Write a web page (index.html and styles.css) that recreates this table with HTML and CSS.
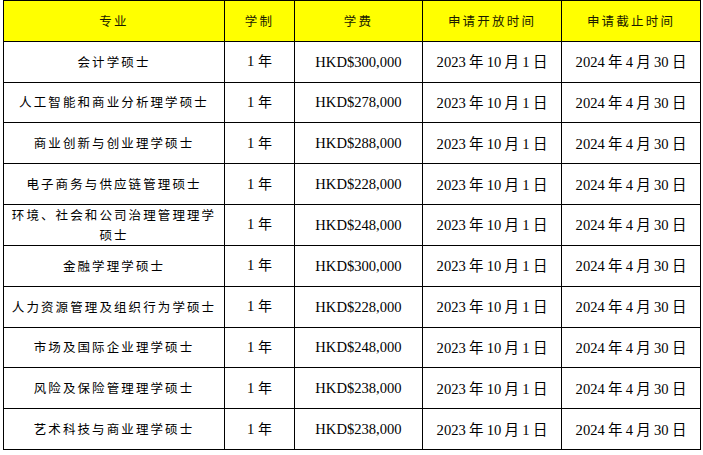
FILE: index.html
```html
<!DOCTYPE html>
<html lang="zh">
<head>
<meta charset="utf-8">
<link rel="stylesheet" href="styles.css">
</head>
<body>
<table class="fees">
  <colgroup>
    <col class="c1"><col class="c2"><col class="c3"><col class="c4"><col class="c5">
  </colgroup>
  <thead>
    <tr class="head">
      <th>专业</th><th>学制</th><th>学费</th><th>申请开放时间</th><th>申请截止时间</th>
    </tr>
  </thead>
  <tbody>
    <tr><td class="name">会计学硕士</td><td><span class="num">1</span> 年</td><td class="num">HKD$300,000</td><td class="date"><span class="num">2023</span> 年 <span class="num">10</span> 月 <span class="num">1</span> 日</td><td class="date"><span class="num">2024</span> 年 <span class="num">4</span> 月 <span class="num">30</span> 日</td></tr>
    <tr><td class="name">人工智能和商业分析理学硕士</td><td><span class="num">1</span> 年</td><td class="num">HKD$278,000</td><td class="date"><span class="num">2023</span> 年 <span class="num">10</span> 月 <span class="num">1</span> 日</td><td class="date"><span class="num">2024</span> 年 <span class="num">4</span> 月 <span class="num">30</span> 日</td></tr>
    <tr><td class="name">商业创新与创业理学硕士</td><td><span class="num">1</span> 年</td><td class="num">HKD$288,000</td><td class="date"><span class="num">2023</span> 年 <span class="num">10</span> 月 <span class="num">1</span> 日</td><td class="date"><span class="num">2024</span> 年 <span class="num">4</span> 月 <span class="num">30</span> 日</td></tr>
    <tr><td class="name">电子商务与供应链管理硕士</td><td><span class="num">1</span> 年</td><td class="num">HKD$228,000</td><td class="date"><span class="num">2023</span> 年 <span class="num">10</span> 月 <span class="num">1</span> 日</td><td class="date"><span class="num">2024</span> 年 <span class="num">4</span> 月 <span class="num">30</span> 日</td></tr>
    <tr><td class="name wrap">环境、社会和公司治理管理理学硕士</td><td><span class="num">1</span> 年</td><td class="num">HKD$248,000</td><td class="date"><span class="num">2023</span> 年 <span class="num">10</span> 月 <span class="num">1</span> 日</td><td class="date"><span class="num">2024</span> 年 <span class="num">4</span> 月 <span class="num">30</span> 日</td></tr>
    <tr><td class="name">金融学理学硕士</td><td><span class="num">1</span> 年</td><td class="num">HKD$300,000</td><td class="date"><span class="num">2023</span> 年 <span class="num">10</span> 月 <span class="num">1</span> 日</td><td class="date"><span class="num">2024</span> 年 <span class="num">4</span> 月 <span class="num">30</span> 日</td></tr>
    <tr><td class="name">人力资源管理及组织行为学硕士</td><td><span class="num">1</span> 年</td><td class="num">HKD$228,000</td><td class="date"><span class="num">2023</span> 年 <span class="num">10</span> 月 <span class="num">1</span> 日</td><td class="date"><span class="num">2024</span> 年 <span class="num">4</span> 月 <span class="num">30</span> 日</td></tr>
    <tr><td class="name">市场及国际企业理学硕士</td><td><span class="num">1</span> 年</td><td class="num">HKD$248,000</td><td class="date"><span class="num">2023</span> 年 <span class="num">10</span> 月 <span class="num">1</span> 日</td><td class="date"><span class="num">2024</span> 年 <span class="num">4</span> 月 <span class="num">30</span> 日</td></tr>
    <tr><td class="name">风险及保险管理理学硕士</td><td><span class="num">1</span> 年</td><td class="num">HKD$238,000</td><td class="date"><span class="num">2023</span> 年 <span class="num">10</span> 月 <span class="num">1</span> 日</td><td class="date"><span class="num">2024</span> 年 <span class="num">4</span> 月 <span class="num">30</span> 日</td></tr>
    <tr><td class="name">艺术科技与商业理学硕士</td><td><span class="num">1</span> 年</td><td class="num">HKD$238,000</td><td class="date"><span class="num">2023</span> 年 <span class="num">10</span> 月 <span class="num">1</span> 日</td><td class="date"><span class="num">2024</span> 年 <span class="num">4</span> 月 <span class="num">30</span> 日</td></tr>
  </tbody>
</table>
</body>
</html>
```

FILE: styles.css
```css
html, body {
  margin: 0;
  padding: 0;
  background: #ffffff;
}

body {
  padding-left: 3px;
  font-family: "Liberation Serif", "Noto Sans CJK SC", serif;
  color: #000000;
}

.fees {
  border-collapse: collapse;
  table-layout: fixed;
  width: 697px;
  font-size: 14px;
}

.c1 { width: 221px; }
.c2 { width: 70px; }
.c3 { width: 128px; }
.c4 { width: 139px; }
.c5 { width: 139px; }

.fees th,
.fees td {
  border: 1px solid #000000;
  padding: 0 7px;
  text-align: center;
  vertical-align: middle;
  height: 39.8px;
  box-sizing: border-box;
  line-height: 20px;
}

.fees tr {
  height: 40.8px;
}

.head th {
  background: #ffff00;
  font-weight: normal;
  font-family: "Noto Sans CJK SC", sans-serif;
  font-size: 12.5px;
  letter-spacing: 2.2px;
  color: #1a1a00;
}

.name {
  font-family: "Noto Sans CJK SC", sans-serif;
  font-size: 12.5px;
  letter-spacing: 2.1px;
  line-height: 22px;
}

.num {
  font-family: "Liberation Serif", serif;
  font-size: 14.6px;
  letter-spacing: 0;
}

.date {
  font-family: "Noto Sans CJK SC", sans-serif;
  font-size: 14.5px;
  white-space: nowrap;
}
```
